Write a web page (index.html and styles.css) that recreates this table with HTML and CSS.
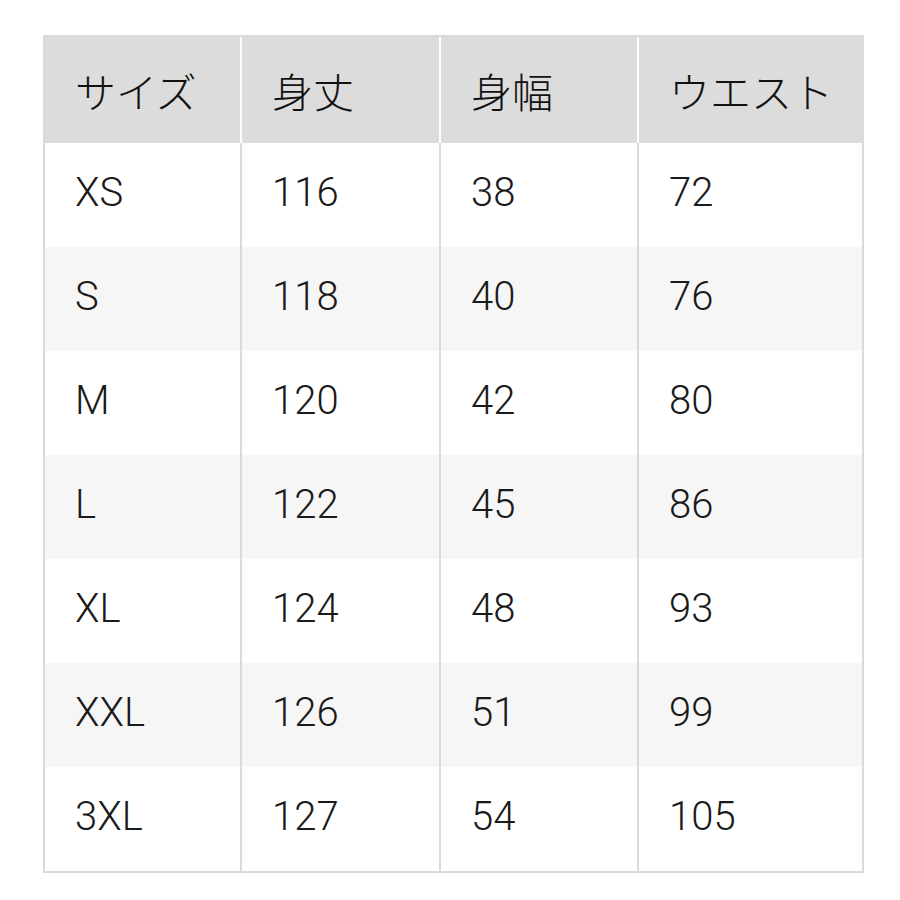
FILE: index.html
```html
<!DOCTYPE html>
<html lang="ja">
<head>
<meta charset="utf-8">
<link rel="stylesheet" href="styles.css">
</head>
<body>
<div class="table">
  <div class="row head">
    <div class="cell">サイズ</div>
    <div class="cell">身丈</div>
    <div class="cell">身幅</div>
    <div class="cell">ウエスト</div>
  </div>
  <div class="row">
    <div class="cell">XS</div><div class="cell">116</div><div class="cell">38</div><div class="cell">72</div>
  </div>
  <div class="row alt">
    <div class="cell">S</div><div class="cell">118</div><div class="cell">40</div><div class="cell">76</div>
  </div>
  <div class="row">
    <div class="cell">M</div><div class="cell">120</div><div class="cell">42</div><div class="cell">80</div>
  </div>
  <div class="row alt">
    <div class="cell">L</div><div class="cell">122</div><div class="cell">45</div><div class="cell">86</div>
  </div>
  <div class="row">
    <div class="cell">XL</div><div class="cell">124</div><div class="cell">48</div><div class="cell">93</div>
  </div>
  <div class="row alt">
    <div class="cell">XXL</div><div class="cell">126</div><div class="cell">51</div><div class="cell">99</div>
  </div>
  <div class="row">
    <div class="cell">3XL</div><div class="cell">127</div><div class="cell">54</div><div class="cell">105</div>
  </div>
</div>
</body>
</html>
```
FILE: styles.css
```css
html, body {
  margin: 0;
  padding: 0;
  background: #ffffff;
}
body {
  padding: 35px 0 0 43px;
  font-family: Roboto, "Noto Sans CJK JP", sans-serif;
  color: #1a1a1a;
}
.table {
  width: 817px;
  border: 2px solid #dadada;
  display: flex;
  flex-direction: column;
}
.row {
  display: grid;
  grid-template-columns: 195px 197px 196px 1fr;
  column-gap: 2px;
  background: #dadada;
  height: 104px;
}
.row.head {
  background: #ffffff;
  height: 106px;
}
.cell {
  background: #ffffff;
  display: flex;
  align-items: center;
  padding-left: 30px;
  padding-bottom: 4px;
  font-size: 40px;
  font-weight: 300;
  line-height: 1;
}
.row.alt .cell {
  background: #f6f6f6;
}
.row.head .cell {
  background: #dcdcdc;
  padding-left: 30px;
  padding-bottom: 0;
  font-family: "Noto Sans CJK JP", sans-serif;
  font-weight: 300;
  font-size: 41px;
  color: #111111;
}
```
